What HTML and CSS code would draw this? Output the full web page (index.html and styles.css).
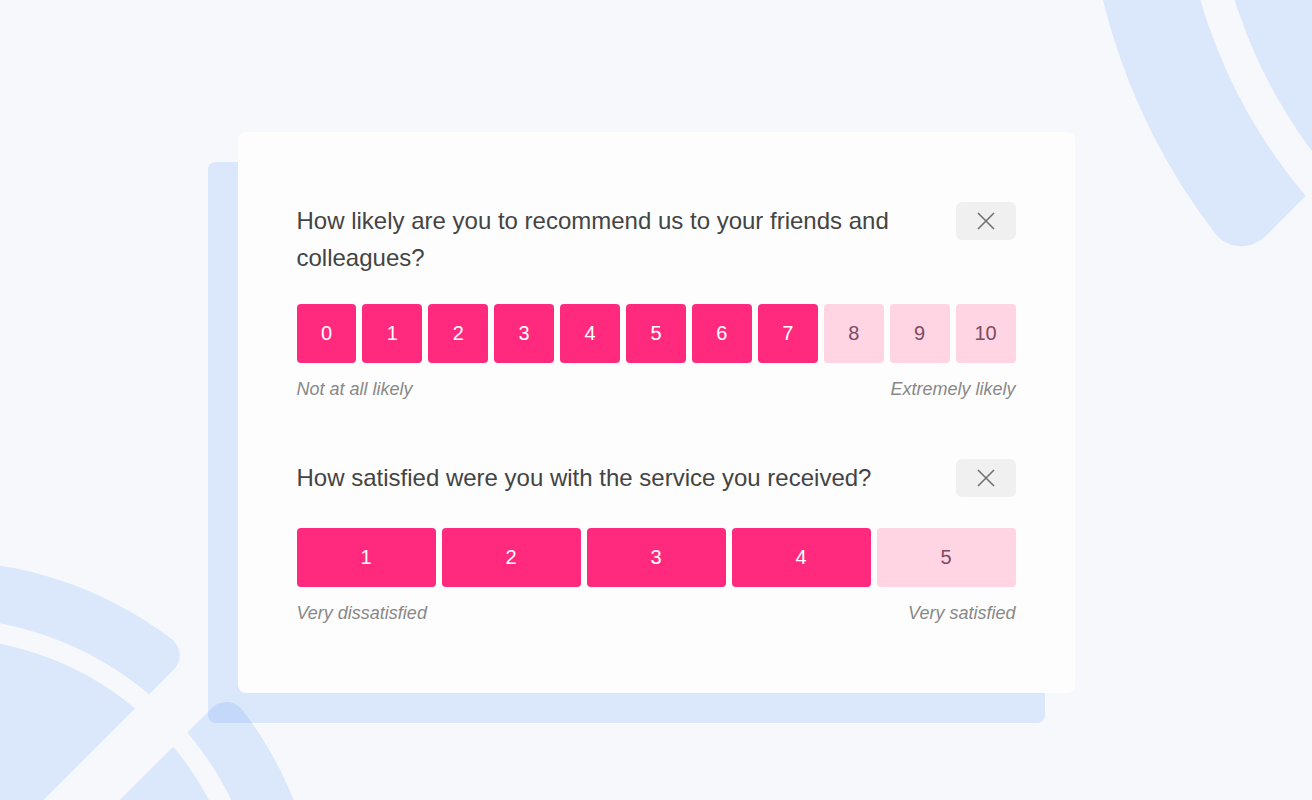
FILE: index.html
```html
<!DOCTYPE html>
<html lang="en">
<head>
<meta charset="utf-8">
<title>Survey</title>
<link rel="stylesheet" href="styles.css">
</head>
<body>
<svg class="backdrop" viewBox="0 0 1312 800" width="1312" height="800" aria-hidden="true">
  <g class="logo-shape">
    <path d="M 1305.7 196.1 L 1265.9 235.8 C 1251.1 250.6 1228.2 249.5 1214.9 233.2 A 630 630 0 0 1 2127.7 -626 L 2061.1 -559.3 A 536 536 0 0 0 1305.7 196.1 Z"/>
    <path d="M 1329.1 172.7 A 503 503 0 0 1 2037.7 -535.9 Z"/>
    <path d="M 149.2 694.3 L 173.4 670.1 C 182.4 661.1 181.6 647.4 171.7 639.3 A 381 381 0 0 0 -347.8 1191.3 L -307.4 1150.9 A 324 324 0 0 1 149.2 694.3 Z"/>
    <path d="M 135.0 708.5 A 304 304 0 0 0 -293.2 1136.7 Z"/>
    <path d="M 187.4 732.5 L 211.5 708.4 C 220.5 699.4 234.3 700.1 242.4 709.9 A 381 381 0 0 1 -309.6 1229.5 L -269.2 1189.1 A 324 324 0 0 0 187.4 732.5 Z"/>
    <path d="M 173.2 746.7 A 304 304 0 0 1 -255.0 1174.9 Z"/>
  </g>
</svg>

<main class="card">
  <section class="question">
    <div class="question-head">
      <p class="question-text">How likely are you to recommend us to your friends and colleagues?</p>
      <button class="close" type="button" aria-label="Close">
        <svg viewBox="0 0 18 18" width="18" height="18"><path d="M1 1 L17 17 M17 1 L1 17"/></svg>
      </button>
    </div>
    <div class="scale scale-11">
      <button class="opt on" type="button">0</button>
      <button class="opt on" type="button">1</button>
      <button class="opt on" type="button">2</button>
      <button class="opt on" type="button">3</button>
      <button class="opt on" type="button">4</button>
      <button class="opt on" type="button">5</button>
      <button class="opt on" type="button">6</button>
      <button class="opt on" type="button">7</button>
      <button class="opt" type="button">8</button>
      <button class="opt" type="button">9</button>
      <button class="opt" type="button">10</button>
    </div>
    <div class="legend">
      <span>Not at all likely</span>
      <span>Extremely likely</span>
    </div>
  </section>

  <section class="question">
    <div class="question-head">
      <p class="question-text">How satisfied were you with the service you received?</p>
      <button class="close" type="button" aria-label="Close">
        <svg viewBox="0 0 18 18" width="18" height="18"><path d="M1 1 L17 17 M17 1 L1 17"/></svg>
      </button>
    </div>
    <div class="scale scale-5">
      <button class="opt on" type="button">1</button>
      <button class="opt on" type="button">2</button>
      <button class="opt on" type="button">3</button>
      <button class="opt on" type="button">4</button>
      <button class="opt" type="button">5</button>
    </div>
    <div class="legend">
      <span>Very dissatisfied</span>
      <span>Very satisfied</span>
    </div>
  </section>
</main>
</body>
</html>
```

FILE: styles.css
```css
* { box-sizing: border-box; }

html, body {
  margin: 0;
  height: 800px;
  overflow: hidden;
}

body {
  background: #f6f8fc;
  font-family: "Liberation Sans", Arial, sans-serif;
  padding-top: 132px;
}

.backdrop {
  position: absolute;
  left: 0;
  top: 0;
}

.logo-shape path {
  fill: rgba(59, 130, 246, 0.14);
}

.card {
  position: relative;
  width: 837px;
  margin: 0 auto;
  padding: 41px 29px 39px;
  background: #fdfdfd;
  border-radius: 8px;
  box-shadow: -30px 30px 0 rgba(59, 130, 246, 0.14);
}

.question {
  padding: 30px 30px 30px;
}

.question-head {
  display: flex;
  justify-content: space-between;
  align-items: flex-start;
  min-height: 40px;
  margin-bottom: 28px;
}

.question-text {
  margin: -1px 0 0;
  flex: 1;
  padding-right: 40px;
  font-size: 24px;
  line-height: 37px;
  color: #444444;
}

.close {
  flex: none;
  width: 60px;
  height: 38px;
  margin-top: -1px;
  border: 0;
  border-radius: 6px;
  background: #f0f0f0;
  display: flex;
  align-items: center;
  justify-content: center;
  padding: 0;
}

.close path {
  stroke: #707070;
  stroke-width: 1.6;
  fill: none;
}

.scale {
  display: grid;
  gap: 6px;
}

.scale-11 { grid-template-columns: repeat(11, 1fr); }
.scale-5 { grid-template-columns: repeat(5, 1fr); }

.opt {
  height: 59px;
  border: 0;
  border-radius: 4px;
  padding: 0;
  background: #ffd5e4;
  color: #7d4b61;
  font-family: "Liberation Sans", Arial, sans-serif;
  font-size: 20px;
}

.opt.on {
  background: #ff2a7e;
  color: #ffffff;
}

.legend {
  display: flex;
  justify-content: space-between;
  margin-top: 15px;
  font-size: 18px;
  line-height: 22px;
  font-style: italic;
  color: #888888;
}
```
